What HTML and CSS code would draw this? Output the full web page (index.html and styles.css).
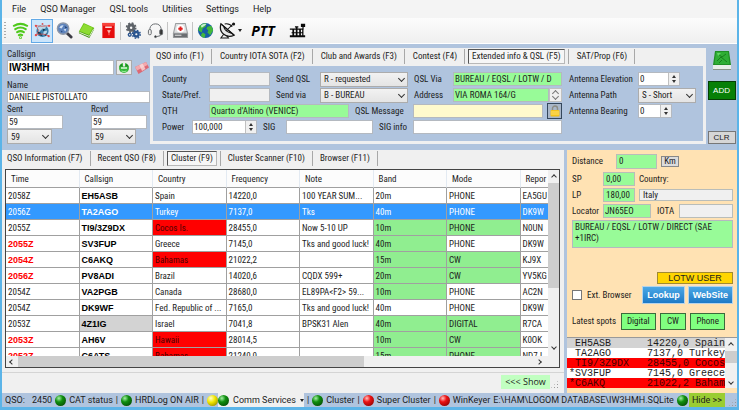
FILE: index.html
```html
<!DOCTYPE html>
<html lang="en">
<head>
<meta charset="utf-8">
<title>QSO Manager</title>
<link rel="stylesheet" href="styles.css">
</head>
<body>
<div class="window">
  <nav class="menu">
    <a href="#">File</a><a href="#">QSO Manager</a><a href="#">QSL tools</a><a href="#">Utilities</a><a href="#">Settings</a><a href="#">Help</a>
  </nav>
  <div class="toolbar">
    <span class="grip"></span>
    <button class="tool" aria-label="Signal"><svg viewBox="0 0 18 18" fill="none" stroke="#4fc91c" stroke-width="2.200" stroke-linecap="round"><path d="M2 4Q9 0 16 4M3.500 7.500Q9 4 14.500 7.500M5.500 10.800Q9 8.500 12.500 10.800M7.300 14Q9 12.800 10.700 14"/><circle cx="9" cy="16.600" r=".4"/></svg></button>
    <button class="tool on" aria-label="Network"><svg viewBox="0 0 18 18"><circle cx="9" cy="9.500" r="6.500" fill="#3b82ae"/><path d="M4 6l4-3 5 1-1 3-4 1-3 3zM10 10l4-1-1 4-3 1z" fill="#b9d9ea"/><path d="M3 10l4 1 2 4-3-1zM9 7l3 1-2 2zM11 13l3-1-2 3z" fill="#173c55"/><g fill="none" stroke="#d95050" stroke-width=".8"><path d="M2 4Q8 5 16 4M2 14Q9 11 16 15M2 4l3 5-3 5"/></g><g fill="#e24848"><circle cx="2" cy="4" r="1.200"/><circle cx="16" cy="4" r="1.200"/><circle cx="2" cy="14" r="1.200"/><circle cx="15.500" cy="15" r="1.200"/><circle cx="9" cy="2" r="1"/></g></svg></button>
    <button class="tool" aria-label="Search"><svg viewBox="0 0 18 18"><path d="M11 11l5 5" stroke="#3a3a44" stroke-width="3" stroke-linecap="round"/><circle cx="7.500" cy="7" r="6" fill="#5d83bd" stroke="#8c97a8" stroke-width="1.500"/><path d="M3.500 6Q5 3 8 3.500L6 7zM8 8l3-1-1 3z" fill="#cfe0f4"/><path d="M5 9l2 1-1 1zM9 4l3 2-2 1z" fill="#21406f"/></svg></button>
    <button class="tool" aria-label="Log book"><svg viewBox="0 0 18 18"><path d="M1 10L6 1l11 5-5 10z" fill="#6cc414"/><path d="M2 9.500L6.500 2l9 4-4 7.500z" fill="#8edc33"/><path d="M1 10l11 4 5-8v2l-5 9-11-5z" fill="#3c8c10"/><path d="M1.500 11l10.500 4.200 4.500-7.700" stroke="#e9f7d4" fill="none"/></svg></button>
    <button class="tool" aria-label="Mail box"><svg viewBox="0 0 18 18"><path d="M2.500 1h13v16h-13z" fill="#e60d0d"/><path d="M2.500 1h13v3h-13z" fill="#f8443c"/><path d="M5.500 4.800h7v1.400h-7z" fill="#fff"/><path d="M8 9h3l-1.500 2.500zM9.500 11v3" fill="#ffc9c0" stroke="#ffc9c0" stroke-width=".6"/></svg></button>
    <span class="sep"></span>
    <button class="tool" aria-label="Options"><svg viewBox="0 0 18 18"><g fill="none"><circle cx="6.500" cy="6" r="2.800" stroke="#5d6268" stroke-width="3"/><circle cx="6.500" cy="6" r="4.800" stroke="#5d6268" stroke-width="1.800" stroke-dasharray="2 1.770"/><circle cx="12" cy="13" r="2.400" stroke="#2b558f" stroke-width="2.500"/><circle cx="12" cy="13" r="4.200" stroke="#2b558f" stroke-width="1.500" stroke-dasharray="1.700 1.600"/><circle cx="5" cy="13.500" r="1.500" stroke="#2b558f" stroke-width="1.500"/></g></svg></button>
    <button class="tool" aria-label="Headset"><svg viewBox="0 0 18 18" fill="none" stroke="#63676b"><path d="M3 10V7Q4 2 9 2t6 5v3" stroke-width="1"/><path d="M15 13q0 2-5 2.500" /><rect x="1.500" y="8" width="3" height="5.500" rx="1.300" fill="#eee"/><rect x="13.500" y="8" width="3" height="5.500" rx="1.300" fill="#333"/><circle cx="9" cy="15.500" r="1" fill="#222"/></svg></button>
    <span class="sep"></span>
    <button class="tool" aria-label="Backup"><svg viewBox="0 0 18 18"><path d="M3.500 1h11L17 12v5H1v-5z" fill="#9a9d9f"/><path d="M4.300 2h9.400l2 9.500H2.300z" fill="#dfe0e1"/><path d="M2 12.500h14V16H2z" fill="#6b6e71"/><path d="M3 14h7" stroke="#eee"/><circle cx="9" cy="7" r="4.200" fill="#fff"/><path d="M9 4.800v4.600M6.700 7.100h4.600" stroke="#e11d1d" stroke-width="2"/></svg></button>
    <span class="sep"></span>
    <button class="tool" aria-label="World"><svg viewBox="0 0 18 18"><circle cx="9" cy="9" r="8" fill="#185fa5"/><path d="M3 4Q6 1 10 1.500L9 5 6 7 5 11 1.500 9Q1.500 6 3 4zM11 5l4-1q2 3 2 5l-3 5-3-3 1-2-2-2zM6 11l3 2-1 4Q5 16 4 14z" fill="#43b83b"/><path d="M4 4q3-3 6-2L8 4 5 6z" fill="#c6f0d5"/></svg></button>
    <button class="tool" aria-label="Satellite dish"><svg viewBox="0 0 18 18"><path d="M2 2Q0 9 5 13t11 1z" fill="#e8e8e8" stroke="#151515" stroke-width="1.300"/><path d="M5 5q1 5 8 7M2 2l14 12M8 9l7-7M5 13l-3 4h8l-2-3M6 2q5-1 8 3" fill="none" stroke="#151515" stroke-width="1.100"/><circle cx="15.500" cy="2" r="1.600" fill="#151515"/></svg></button>
    <span class="caret"></span>
    <button class="tool ptt">PTT</button>
    <button class="tool" aria-label="Morse key"><svg viewBox="0 0 20 18" fill="#090909"><path d="M1 14.500h18V17H1zM4 7h2v8H4zM8 5h2v10H8zM12 7h2v8h-2zM15.500 8h1.500v7h-1.500zM1 6.500h15v1.600H1zM14 1h5v4h-1.800v3h-1.400V5H14zM7 4h4v1.500H7zM3 11h14v1.200H3z"/></svg></button>
  </div>

  <section class="top">
    <form class="station">
      <label for="call">Callsign</label>
      <div class="callrow">
        <input id="call" class="call" value="IW3HMH">
        <button type="button" class="sq" aria-label="Refresh"><svg viewBox="0 0 12 12"><circle cx="6" cy="6" r="5" fill="#38b83c"/><path d="M1 4.500L3.500 1.500 5 5.500h2l1.500-4L11 4.500" fill="#1c8a22"/><path d="M5 1h2v3.500H5z" fill="#e9e9e9"/><path d="M3 6h6" stroke="#e8ffe8" stroke-width="1.400"/><path d="M3.500 9q2.500 1.500 5 0" stroke="#9cf09c" fill="none"/></svg></button>
        <button type="button" class="plain" aria-label="Clear"><svg viewBox="0 0 16 14"><path d="M1 6L12 1l3 5.500L4.500 13z" fill="#dc6874"/><path d="M1 6l11-5 1.500 3L3 9.500z" fill="#f3a9ad"/><path d="M5.500 4l3-1.400 3 5.500-3.500 2z" fill="#f9d9da" opacity=".8"/></svg></button>
      </div>
      <label for="name">Name</label>
      <input id="name" value="DANIELE PISTOLLATO">
      <div class="reports">
        <div><label for="sent">Sent</label><input id="sent" value="59"><span class="sel"><select aria-label="Sent report"><option>59</option></select></span></div>
        <div><label for="rcvd">Rcvd</label><input id="rcvd" value="59"><span class="sel"><select aria-label="Received report"><option>59</option></select></span></div>
      </div>
    </form>

    <div class="panel">
      <div class="tabs">
        <button>QSO info (F1)</button><button>Country IOTA SOTA (F2)</button><button>Club and Awards (F3)</button><button>Contest (F4)</button><button class="cur">Extended info &amp; QSL (F5)</button><button>SAT/Prop (F6)</button>
      </div>
      <form class="ext">
        <div class="fields">
          <div class="r r1"><label for="county">County</label><input id="county" class="off"><label for="sq">Send QSL</label><span class="sel"><select id="sq"><option>R - requested</option></select></span><label for="via">QSL Via</label><input id="via" class="green" value="BUREAU / EQSL / LOTW / D"></div>
          <div class="r r1"><label for="state">State/Pref.</label><input id="state" class="off"><label for="sv">Send via</label><span class="sel"><select id="sv"><option>B - BUREAU</option></select></span><label for="addr">Address</label><span class="addr"><input id="addr" class="green" value="VIA ROMA 164/G"><i class="updown"></i></span></div>
          <div class="r r3"><label for="qth">QTH</label><input id="qth" class="green" value="Quarto d'Altino (VENICE)"><label for="msg">QSL Message</label><input id="msg" class="cream"><button type="button" class="lock" aria-label="Lock"><svg viewBox="0 0 12 12"><path d="M3.500 6V3.500a2.500 2.500 0 0 1 5 0V6" fill="none" stroke="#8c8c84" stroke-width="1.400"/><rect x="1.500" y="5" width="9" height="6.500" rx="1" fill="#f4c31b"/><path d="M2 7h8M2 9h8" stroke="#ffe272"/></svg></button></div>
          <div class="r r4"><label for="pow">Power</label><span class="spin"><input id="pow" value="100,000"><i></i></span><label for="sig">SIG</label><input id="sig"><label for="sigi">SIG info</label><input id="sigi"></div>
        </div>
        <div class="fields antenna">
          <div class="r"><label for="ele">Antenna Elevation</label><span class="spin w42"><input id="ele" value="0"><i></i></span></div>
          <div class="r"><label for="path">Antenna Path</label><span class="sel"><select id="path"><option>S - Short</option></select></span></div>
          <div class="r"><label for="bear">Antenna Bearing</label><span class="spin w34"><input id="bear" value="0"><i></i></span></div>
        </div>
      </form>
    </div>

    <div class="actions">
      <button class="plain" aria-label="Save"><svg class="disk" viewBox="0 0 20 20"><path d="M3 0h14l2 14v5H1v-5z" fill="#1f8f24"/><path d="M4 1h12l1.500 12h-15z" fill="#2fae35"/><path d="M6 3l4 3 4-3M5 10l4-4 6 5M7 12l3-3" stroke="#17801c" fill="none"/><path d="M5 2h4l-3 3z" fill="#62d565"/><path d="M1 14h18v4H1z" fill="#e8eee8"/><path d="M1 18h18v1H1z" fill="#8a958a"/></svg></button>
      <button class="add">ADD</button>
      <button class="clr">CLR</button>
    </div>
  </section>

  <main class="main">
    <section class="left">
      <div class="tabs low">
        <button>QSO Information (F7)</button><button>Recent QSO (F8)</button><button class="cur">Cluster (F9)</button><button>Cluster Scanner (F10)</button><button>Browser (F11)</button>
      </div>
      <div class="grid">
        <div class="view">
          <table>
            <thead><tr><th>Time</th><th>Callsign</th><th>Country</th><th>Frequency</th><th>Note</th><th>Band</th><th>Mode</th><th>Repor</th></tr></thead>
            <tbody>
              <tr><td>2058Z</td><td>EH5ASB</td><td>Spain</td><td>14220,0</td><td>100 YEAR SUM...</td><td>20m</td><td>PHONE</td><td>EA5GU</td></tr>
              <tr class="sel-row"><td>2056Z</td><td>TA2AGO</td><td>Turkey</td><td>7137,0</td><td>Tks</td><td>40m</td><td>PHONE</td><td>DK9W</td></tr>
              <tr><td>2055Z</td><td>TI9/3Z9DX</td><td class="red">Cocos Is.</td><td>28455,0</td><td>Now 5-10 UP</td><td class="ok">10m</td><td class="ok">PHONE</td><td>N0UN</td></tr>
              <tr><td class="new">2055Z</td><td>SV3FUP</td><td>Greece</td><td>7145,0</td><td>Tks and good luck!</td><td class="ok">40m</td><td>PHONE</td><td>DK9W</td></tr>
              <tr><td class="new">2054Z</td><td>C6AKQ</td><td class="red">Bahamas</td><td>21022,2</td><td></td><td class="ok">15m</td><td class="ok">CW</td><td>KJ9X</td></tr>
              <tr><td class="new">2056Z</td><td>PV8ADI</td><td>Brazil</td><td>14020,6</td><td>CQDX 599+</td><td class="ok">20m</td><td class="ok">CW</td><td>YV5KG</td></tr>
              <tr><td>2054Z</td><td>VA2PGB</td><td>Canada</td><td>28680,0</td><td>EL89PA&lt;F2&gt; 59...</td><td class="ok">10m</td><td>PHONE</td><td>AC2N</td></tr>
              <tr><td>2054Z</td><td>DK9WF</td><td>Fed. Republic of ...</td><td>7165,0</td><td>Tks and good luck!</td><td>40m</td><td>PHONE</td><td>DK9W</td></tr>
              <tr><td>2053Z</td><td class="gray">4Z1IG</td><td>Israel</td><td>7041,8</td><td>BPSK31 Alen</td><td class="ok">40m</td><td class="ok">DIGITAL</td><td>R7CA</td></tr>
              <tr><td class="new">2053Z</td><td>AH6V</td><td class="red">Hawaii</td><td>28014,5</td><td></td><td class="ok">10m</td><td class="ok">CW</td><td>K0OK</td></tr>
              <tr><td class="new">2052Z</td><td>C6ATS</td><td class="red">Bahamas</td><td>21240,0</td><td></td><td class="ok">15m</td><td class="ok">PHONE</td><td>ND7J</td></tr>
            </tbody>
          </table>
        </div>
        <div class="vbar"><b class="ch up"></b><span></span><b class="ch down"></b></div>
        <div class="hbar"><b class="ch lt"></b><span></span><b class="ch rt"></b></div>
      </div>
      <div class="showrow"><button>&lt;&lt;&lt; Show</button><i class="resize"></i></div>
    </section>

    <aside class="right">
      <div class="info">
        <label for="dist">Distance</label><input id="dist" class="green dist" value="0"><button class="km">Km</button>
      </div>
      <div class="loc">
        <label for="sp">SP</label><input id="sp" class="green num" value="0,00"><label for="ctry" class="wide">Country:</label>
        <label for="lp">LP</label><input id="lp" class="green num" value="180,00"><input id="ctry" class="off wide italy" value="Italy">
      </div>
      <div class="loc2">
        <label for="lo">Locator</label><input id="lo" class="green" value="JN65EO"><label for="iota">IOTA</label><input id="iota" class="off">
      </div>
      <textarea class="green" aria-label="QSL route">BUREAU / EQSL / LOTW / DIRECT (SAE +1IRC)</textarea>
      <div class="lotw">LOTW USER</div>
      <div class="web"><label><input type="checkbox">Ext. Browser</label><button>Lookup</button><button>WebSite</button></div>
      <div class="spots"><span>Latest spots</span><button>Digital</button><button>CW</button><button>Phone</button></div>
      <div class="list">
        <ul>
          <li class="gray"> EH5ASB      14220,0 Spain</li>
          <li> TA2AGO      7137,0 Turkey</li>
          <li class="red"> TI9/3Z9DX   28455,0 Cocos</li>
          <li>*SV3FUP      7145,0 Greece</li>
          <li class="red">*C6AKQ       21022,2 Baham</li>
        </ul>
        <div class="vbar"><b class="ch up"></b><span></span><b class="ch down"></b></div>
      </div>
    </aside>
  </main>

  <footer class="status">
    <span class="qso">QSO:</span><span class="cnt">2450</span>
    <i class="led"></i><span>CAT status</span><em>|</em>
    <i class="led"></i><span>HRDLog ON AIR</span><em>|</em>
    <i class="led y"></i><button class="comm"><i class="led"></i>Comm Services<span class="caret"></span></button><em>|</em>
    <i class="led"></i><span>Cluster</span><em>|</em>
    <i class="led r"></i><span>Super Cluster</span><em>|</em>
    <i class="led r"></i><span>WinKeyer</span>
    <span class="file">E:\HAM\LOGOM DATABASE\IW3HMH.SQLite</span><i class="led"></i><button class="hide">Hide &gt;&gt;</button><i class="resize"></i>
  </footer>
</div>
</body>
</html>
```
FILE: styles.css
```css
* { box-sizing: border-box; }
body {
  margin: 0;
  color: #1c1c1c;
  font: 9px/12px "Roboto Condensed", "Liberation Sans Narrow", "Liberation Sans", sans-serif;
}
button, input, select, textarea { font: inherit; color: inherit; margin: 0; padding: 0; border-radius: 0; }
button { border: 0; background: none; white-space: nowrap; }
label, span { white-space: nowrap; }
svg { display: block; }
i, em { font-style: normal; }

.window {
  display: flex;
  flex-direction: column;
  height: 100vh;
  overflow: hidden;
  background: #b0c4de;
  border: solid #5bb4e8;
  border-width: 0 2px 3px;
}

/* menu and toolbar */
.menu {
  display: flex;
  flex: none;
  height: 18px;
  padding-left: 10px;
  gap: 14px;
  background: #f4f4f4;
  font: 9px/18px "Roboto", sans-serif;
}
.menu a { color: #1c1c1c; text-decoration: none; }
.toolbar {
  display: flex;
  flex: none;
  align-items: center;
  height: 26px;
  padding: 0 2px;
  background: linear-gradient(#fcfcfc, #efefef);
  border-bottom: 1px solid #fff;
}
.grip { width: 2px; height: 17px; margin-right: 3px; background: repeating-linear-gradient(#aaa 0 1px, transparent 1px 3px); }
.tool { display: flex; align-items: center; justify-content: center; width: 22px; height: 24px; border: 1px solid transparent; }
.tool svg { width: 17px; height: 17px; flex: none; }
.tool.on { background: #cbe5fb; border-color: #62a9e6; }
.sep { width: 1px; height: 18px; margin: 0 1px; background: #c4c4c4; }
.caret { border: solid transparent; border-width: 3px 2px 0; border-top-color: #222; }
.tool.ptt { width: 32px; margin: 0 7px 0 5px; font: italic bold 14px "Open Sans", sans-serif; color: #000; }

/* inputs */
input, textarea, select { width: 100%; min-width: 0; height: 14px; border: 1px solid #b4b9c0; background: #fff; padding: 0 1px; outline: 0; }
.off { background: #f0f0f0; }
.green { background: #98fb98; }
.cream { background: #fffacd; }
.sel { position: relative; display: block; min-width: 0; }
.sel select { appearance: none; display: block; height: 15px; padding: 0 3px; background: linear-gradient(#f2f2f2, #e4e4e4); border-color: #acacac; }
.sel::after {
  content: "";
  position: absolute;
  right: 4px;
  top: 4px;
  width: 4px;
  height: 4px;
  border: solid #333;
  border-width: 0 1px 1px 0;
  transform: rotate(45deg);
  pointer-events: none;
}
.spin { display: flex; min-width: 0; height: 14px; background: #fff; border: 1px solid #b4b9c0; }
.spin input { border: 0; height: 12px; }
.spin i, .updown { position: relative; flex: none; width: 11px; background: #f0f0f0; border-left: 1px solid #c0c0c0; }
.spin i::before, .spin i::after { content: ""; position: absolute; left: 3px; border: solid transparent; border-width: 0 2px; }
.spin i::before { top: 2px; border-bottom: 3px solid #333; }
.spin i::after { bottom: 2px; border-top: 3px solid #333; }

/* top area */
.top { display: flex; flex: none; height: 106px; padding: 4px 0 6px 5px; }
.station { display: flex; flex-direction: column; width: 143px; }
.station label { display: block; height: 12px; }
.callrow { display: flex; gap: 2px; margin-bottom: 4px; }
.station .call { flex: 1; height: 15px; font: bold 10px "Liberation Sans", sans-serif; color: #000; }
.sq { display: flex; flex: none; align-items: center; justify-content: center; width: 16px; height: 15px; background: #e9e9e9; border: 1px solid #aaa; }
.sq svg { flex: none; width: 12px; height: 12px; }
.plain { flex: none; width: 16px; }
.callrow .plain svg { width: 16px; height: 14px; }
.station #name { height: 15px; margin-bottom: 1px; }
.reports { display: flex; gap: 28px; }
.reports > div { width: 56px; }
.reports label { height: 11px; line-height: 11px; }
.reports input { display: block; }
.reports .sel { width: 45px; }

.panel { flex: 1; min-width: 0; padding: 0 3px 3px; background: #f0f0f0; }
.tabs { display: flex; height: 18px; }
.tabs button { height: 15px; padding: 0 7px; margin-top: 1px; border-right: 1px solid #a8a8a8; line-height: 13px; }
.panel .tabs button { padding: 0 7px 0 8px; }
.panel .tabs button:first-child, .low button:first-child { padding-left: 3px; }
.tabs button.cur, .panel .tabs button.cur { margin-left: 3px; margin-right: 3px; padding: 0 3px; border: 1px solid #b8b8b8; border-top-color: #555; border-left-color: #555; background: #f6f6f6; }
.tabs .cur + button { border-left: 1px solid #a8a8a8; }
.ext { display: flex; gap: 7px; height: 75px; padding: 5px 4px 0 9px; background: #b0c4de; }
.fields { flex: 1; min-width: 0; }
.r { display: grid; align-items: center; height: 16px; }
.r1 { grid-template-columns: 47px 61px 50px 88px 45px 1fr; }
.r3 { grid-template-columns: 47px 140px 64px 1fr 19px; }
.r4 { grid-template-columns: 30px 65px 29px 87px 40px 1fr; }
.r > label + input, .r > input { display: block; }
.r > :not(label) + label { padding-left: 6px; }
.antenna { flex: none; width: 130px; }
.antenna .r { grid-template-columns: 69px 1fr; }
.antenna .w42 { width: 42px; }
.antenna .w34 { width: 34px; }
.antenna .sel { width: 58px; }
.addr { display: flex; min-width: 0; }
.updown { width: 13px; border: 1px solid #c0c0c0; }
.updown::before, .updown::after { content: ""; position: absolute; left: 3px; width: 4px; height: 4px; border: solid #777; transform: rotate(45deg); }
.updown::before { top: 2px; border-width: 1px 0 0 1px; }
.updown::after { bottom: 2px; border-width: 0 1px 1px 0; }
.lock { display: flex; align-items: center; justify-content: center; width: 15px; height: 16px; margin-left: 4px; border: 1px solid #34475c; background: #a9b7c9; }
.lock svg { flex: none; width: 12px; height: 12px; }
.actions { display: flex; flex-direction: column; align-items: center; width: 31px; font-family: "Liberation Sans", sans-serif; font-size: 8px; }
.actions .plain { width: 20px; margin-top: 3px; }
.disk { width: 20px; height: 20px; }
.add { width: 28px; height: 19px; margin-top: 10px; background: #078007; color: #fff; border: 1px solid #053f05; }
.clr { width: 28px; height: 13px; margin-top: auto; background: #d6d6d6; border: 1px solid #777; line-height: 11px; }

/* lower area */
.main { display: flex; flex: 1; min-height: 0; gap: 3px; }
.left { display: flex; flex-direction: column; flex: 1; min-width: 0; background: #f0f0f0; }
.low { padding-left: 2px; height: 19px; }
.grid {
  display: grid;
  grid-template: 1fr 11px / 1fr 11px;
  height: 199px;
  margin: 0 4px 0 3px;
  border: 1px solid #444;
  background: #f0f0f0;
}
.view { overflow: hidden; background: #fff; }
table { width: 588px; table-layout: fixed; border-collapse: separate; border-spacing: 0; }
th, td { height: 16px; padding: 0 0 0 2px; line-height: 14px; text-align: left; font-weight: normal; white-space: nowrap; overflow: hidden; border: solid #a0a0a0; border-width: 0 1px 1px 0; }
th { height: 18px; padding-left: 5px; background: #fcfcfc; border-right-color: #e3eaf2; }
td:nth-child(2) { font: bold 9px/14px "Liberation Sans", sans-serif; color: #000; }
td.new { color: #f00; font: bold 9px/14px "Liberation Sans", sans-serif; }
td.red { background: #f00; color: #4c0000; }
td.ok { background: #90ee90; }
.gray { background: #d3d3d3; }
.sel-row td, .sel-row td:nth-child(2) { background: #3399ff; color: #fff; }

.vbar { display: flex; flex-direction: column; align-items: center; background: #f0f0f0; }
.vbar span { width: 100%; background: #cdcdcd; }
.grid .vbar span { height: 105px; }
.grid .vbar { padding-bottom: 3px; }
.vbar .down { margin-top: auto; }
.hbar { display: flex; align-items: center; grid-column: 1 / 3; padding-right: 14px; background: #f0f0f0; }
.hbar span { width: 346px; height: 100%; background: #cdcdcd; }
.hbar .rt { margin-left: auto; }
.ch { flex: none; width: 4px; height: 4px; margin: 5px 4px 4px; border: solid #333; border-width: 1px 0 0 1px; transform: rotate(45deg); }
.ch.down { transform: rotate(225deg); }
.ch.lt { transform: rotate(-45deg); }
.ch.rt { transform: rotate(135deg); }
.showrow { display: flex; justify-content: flex-end; margin-top: 4px; padding: 2px 5px 0 0; border-top: 1px solid #d4d4d4; }
.showrow button { width: 49px; height: 14px; background: #c1ffc1; font: 9px/14px "Open Sans", sans-serif; }
.resize { flex: none; width: 9px; height: 9px; align-self: flex-end; background: radial-gradient(circle, #999 1px, transparent 1px) 0 0 / 3px 3px; clip-path: polygon(100% 0, 100% 100%, 0 100%); }

.right { display: flex; flex-direction: column; width: 170px; padding: 3px 0 0 5px; background: #ffe2b3; }
.right input:not([type]) { border-color: #b9bdb9; }
.info { display: flex; align-items: center; height: 16px; margin-bottom: 2px; }
.info label { width: 44px; }
.info .dist { width: 41px; height: 15px; }
.km { width: 18px; height: 11px; margin-left: 4px; line-height: 9px; background: #dcdcdc; border: 1px solid #888; }
.loc { display: grid; grid-template-columns: 31px 32px 1fr; align-items: center; grid-auto-rows: 16px; margin-right: 4px; }
.right .num, .dist { padding-left: 2px; }
.loc .wide { margin-left: 4px; width: auto; }
.loc .italy { height: 12px; padding-left: 3px; }
.loc2 { display: grid; grid-template-columns: 31px 48px 28px 1fr; align-items: center; height: 16px; margin-right: 4px; }
.loc2 input + label { padding-left: 6px; }
textarea { flex: none; width: auto; height: 28px; margin: 1px 4px 0 0; padding: 1px 2px; line-height: 11px; resize: none; overflow: hidden; display: block; }
.lotw { align-self: flex-end; width: 76px; height: 12px; margin: 24px 4px 0 0; background: #ffd500; border: 1px solid #a08a30; text-align: center; font: 9px/10px "Liberation Sans", sans-serif; }
.web { display: flex; align-items: center; gap: 3px; margin: 2px 4px 0 0; height: 18px; }
.web label { display: flex; align-items: center; gap: 5px; flex: 1; }
.web input { appearance: none; width: 10px; height: 10px; border: 1px solid #777; }
.web button { height: 18px; padding: 0 4px; border: 1px solid #b5d3ea; background: linear-gradient(#4ba8e6, #1e7ac6); color: #fff; font: bold 9px/15px "Liberation Sans", sans-serif; }
.spots { display: flex; align-items: center; gap: 4px; margin: 8px 12px 7px 0; height: 18px; }
.spots span { width: 45px; }
.spots button { flex: 34 1 0; height: 17px; background: #80ff80; border: 1px solid #3b6b3b; }
.spots button:nth-child(3) { flex-grow: 26; }
.list { display: flex; height: 51px; margin-left: -5px; background: #fff; border-top: 1px solid #999; }
.list ul { flex: 1; min-width: 0; margin: 0; padding: 0; list-style: none; font: 10px/12px "Liberation Mono", monospace; }
.list li { height: 10px; padding-left: 2px; white-space: pre; }
.list .red { background: #f00; color: #400; }
.list .vbar { width: 12px; }
.list .vbar span { height: 12px; }

/* status bar */
.status { display: flex; flex: none; align-items: center; height: 14px; padding-left: 3px; gap: 3px; background: #b0c4de; font: 9px/14px "Roboto", sans-serif; }
.led { flex: none; width: 11px; height: 11px; border-radius: 50%; background: radial-gradient(circle at 35% 30%, #a5f0a5 0, #109010 35%, #034503 90%); }
.led.r { background: radial-gradient(circle at 35% 30%, #ffc0c0 0, #ec1313 35%, #7c0000 95%); }
.led.y { background: radial-gradient(circle at 35% 30%, #ffffc8 0, #f1e600 40%, #8a7d00 95%); }
.cnt { margin-left: 4px; }
.comm { display: flex; align-items: center; gap: 4px; height: 14px; margin-left: -3px; background: #f0f0f0; }
.file { margin-left: auto; }
.hide { width: 37px; height: 14px; margin-left: -2px; background: #9acd32; }
```
